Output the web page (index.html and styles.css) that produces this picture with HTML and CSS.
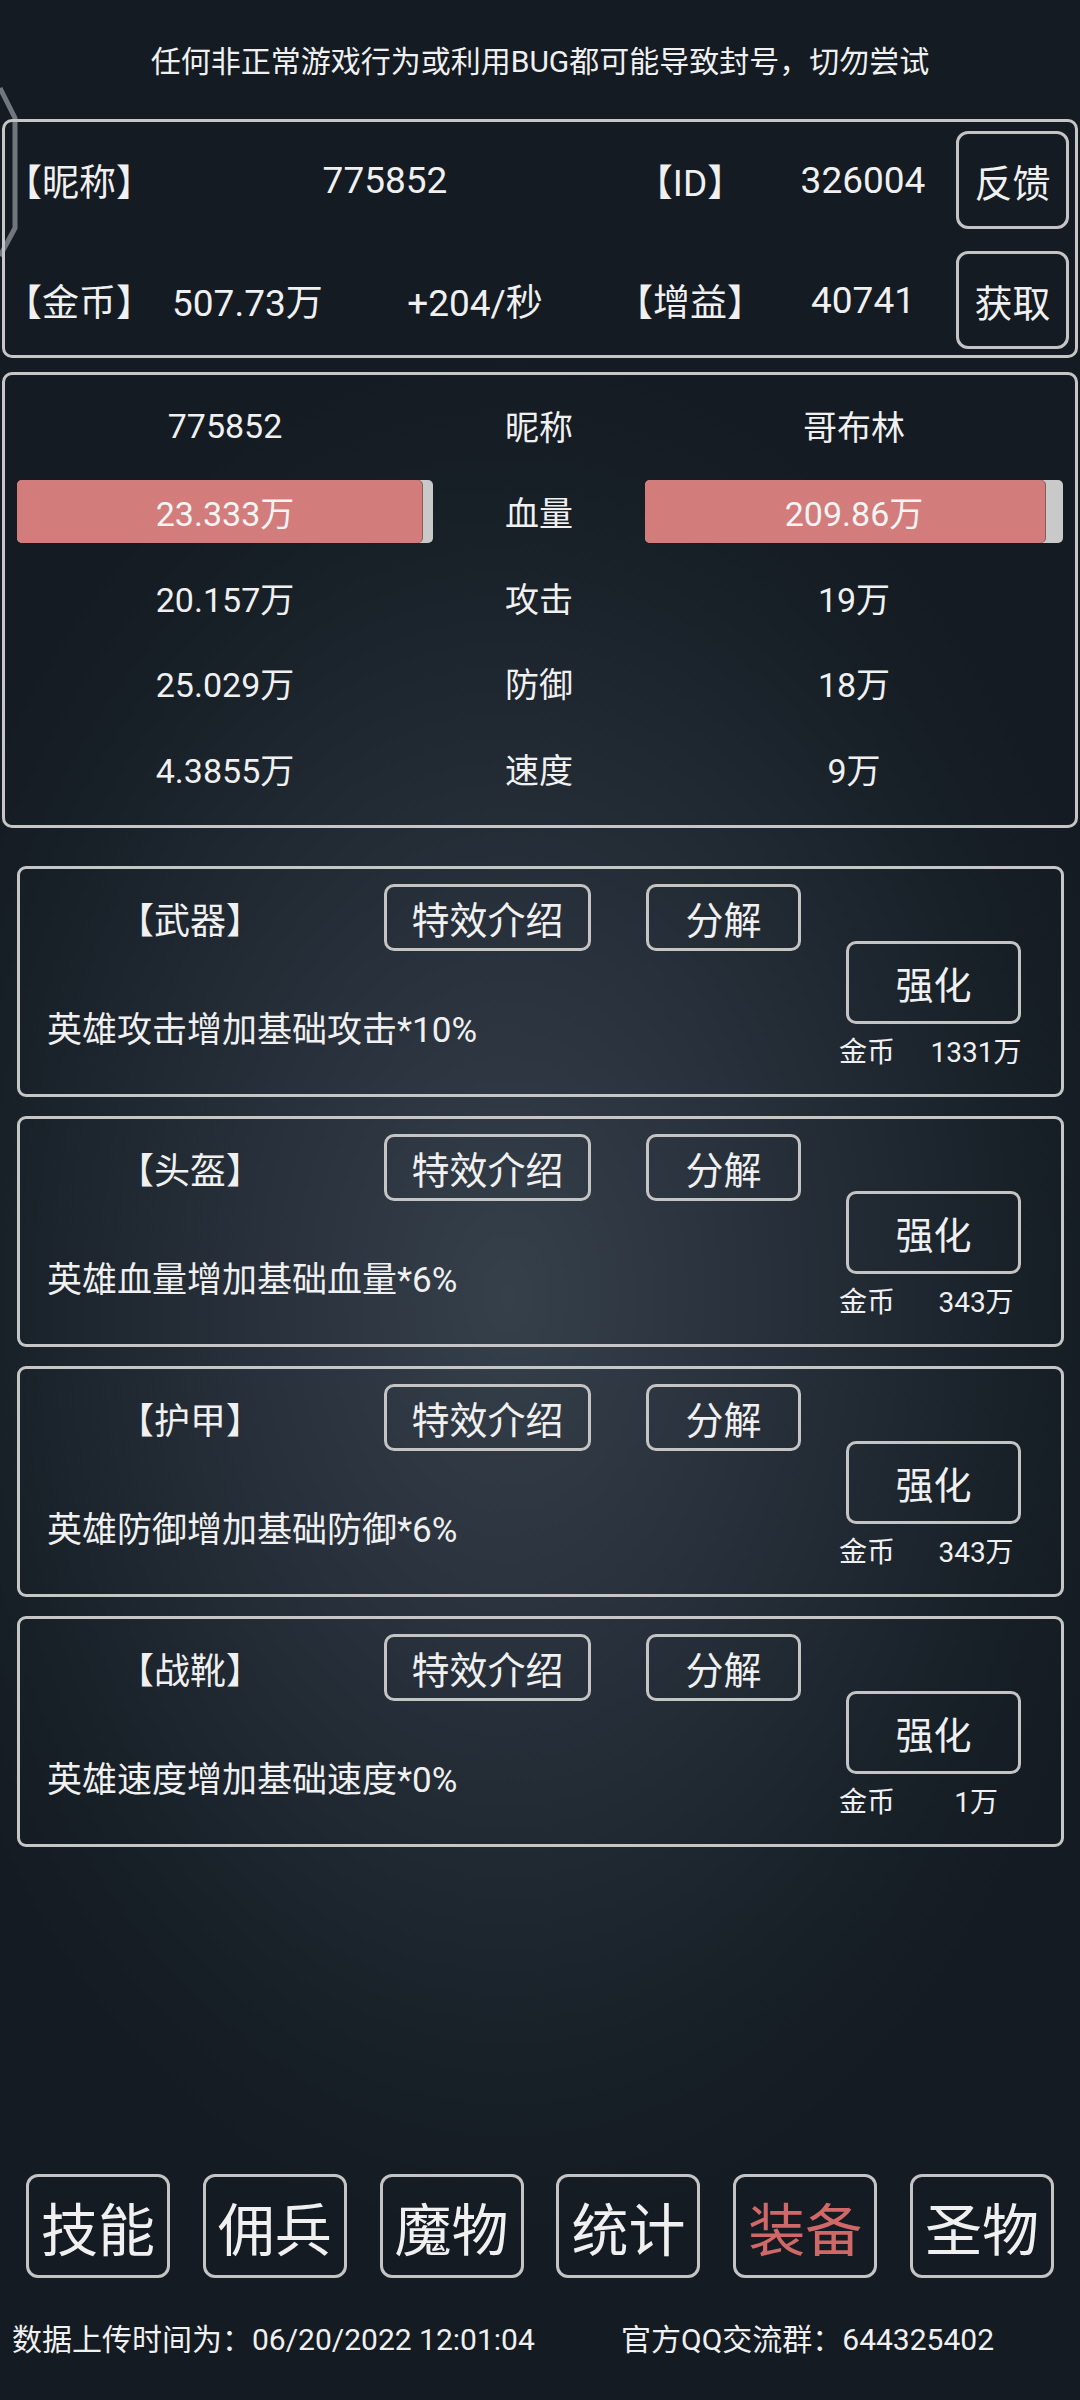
FILE: index.html
```html
<!DOCTYPE html>
<html lang="zh">
<head>
<meta charset="UTF-8">
<meta name="viewport" content="width=device-width, initial-scale=1.0">
<title>装备</title>
<link rel="stylesheet" href="styles.css">
</head>
<body>
<svg class="edge" width="24" height="180" viewBox="0 0 24 180"><path d="M0 2 L15 32 L15 142 L0 170" fill="none" stroke="rgba(190,195,200,0.55)" stroke-width="5"/></svg>

<div class="notice">任何非正常游戏行为或利用BUG都可能导致封号，切勿尝试</div>

<div class="info">
  <div class="lbl">【昵称】</div>
  <div class="val wide">775852</div>
  <div class="lbl mid">【ID】</div>
  <div class="val">326004</div>
  <button class="btn side">反馈</button>
  <div class="lbl">【金币】</div>
  <div class="val left">507.73万</div>
  <div class="val">+204/秒</div>
  <div class="lbl mid">【增益】</div>
  <div class="val">40741</div>
  <button class="btn side">获取</button>
</div>

<div class="stats">
  <div>775852</div><div>昵称</div><div>哥布林</div>
  <div class="bar"><div class="fill" style="width:97.4%"></div><span>23.333万</span></div>
  <div>血量</div>
  <div class="bar"><div class="fill" style="width:95.7%"></div><span>209.86万</span></div>
  <div>20.157万</div><div>攻击</div><div>19万</div>
  <div>25.029万</div><div>防御</div><div>18万</div>
  <div>4.3855万</div><div>速度</div><div>9万</div>
</div>

<div class="card">
  <div class="card-main">
    <div class="card-top">
      <div class="card-title">【武器】</div>
      <button class="btn fx">特效介绍</button>
      <button class="btn split">分解</button>
    </div>
    <div class="card-desc">英雄攻击增加基础攻击*10%</div>
  </div>
  <div class="card-side">
    <button class="btn up">强化</button>
    <div class="price"><span>金币</span><span class="num">1331万</span></div>
  </div>
</div>

<div class="card">
  <div class="card-main">
    <div class="card-top">
      <div class="card-title">【头盔】</div>
      <button class="btn fx">特效介绍</button>
      <button class="btn split">分解</button>
    </div>
    <div class="card-desc">英雄血量增加基础血量*6%</div>
  </div>
  <div class="card-side">
    <button class="btn up">强化</button>
    <div class="price"><span>金币</span><span class="num">343万</span></div>
  </div>
</div>

<div class="card">
  <div class="card-main">
    <div class="card-top">
      <div class="card-title">【护甲】</div>
      <button class="btn fx">特效介绍</button>
      <button class="btn split">分解</button>
    </div>
    <div class="card-desc">英雄防御增加基础防御*6%</div>
  </div>
  <div class="card-side">
    <button class="btn up">强化</button>
    <div class="price"><span>金币</span><span class="num">343万</span></div>
  </div>
</div>

<div class="card">
  <div class="card-main">
    <div class="card-top">
      <div class="card-title">【战靴】</div>
      <button class="btn fx">特效介绍</button>
      <button class="btn split">分解</button>
    </div>
    <div class="card-desc">英雄速度增加基础速度*0%</div>
  </div>
  <div class="card-side">
    <button class="btn up">强化</button>
    <div class="price"><span>金币</span><span class="num">1万</span></div>
  </div>
</div>

<div class="nav">
  <button class="btn tab">技能</button>
  <button class="btn tab">佣兵</button>
  <button class="btn tab">魔物</button>
  <button class="btn tab">统计</button>
  <button class="btn tab active">装备</button>
  <button class="btn tab">圣物</button>
</div>

<div class="footer">
  <span class="upload">数据上传时间为：06/20/2022 12:01:04</span>
  <span>官方QQ交流群：644325402</span>
</div>
</body>
</html>
```

FILE: styles.css
```css
* { box-sizing: border-box; }
body {
  margin: 0; width: 1080px; height: 2400px; overflow: hidden; position: relative;
  background: radial-gradient(ellipse 640px 950px at 47% 54%, #36404a 0%, #28313b 40%, #182028 80%, #141b22 100%);
  color: #f0f0f0;
  font-family: Roboto, "Noto Sans CJK SC", sans-serif;
}
.edge { position: absolute; left: 0; top: 86px; }

.btn {
  font: inherit; color: inherit; background: transparent; padding: 0;
  border: 3px solid #c4c4c4; border-radius: 12px;
  display: flex; align-items: center; justify-content: center;
}

.notice { height: 119px; display: flex; align-items: center; justify-content: center; font-size: 30px; padding-bottom: 2px; }

/* top info box */
.info {
  width: 1076px; height: 239px; margin-left: 2px;
  border: 3px solid #c6c6c6; border-radius: 10px;
  display: grid; grid-template-columns: 155px 180px 270px 160px 186px 113px;
  grid-template-rows: 98px 98px; row-gap: 22px; padding-top: 9px;
  font-size: 37px; align-items: center;
}
.info .lbl { white-space: nowrap; }
.info .mid { text-align: center; }
.info .val { text-align: center; }
.info .wide { grid-column: span 2; }
.info .left { text-align: left; padding-left: 12px; }
.info .side { height: 98px; font-size: 38px; }

/* stats */
.stats {
  width: 1076px; height: 456px; margin: 14px 0 0 2px;
  border: 3px solid #c6c6c6; border-radius: 10px;
  padding: 8px 12px 0;
  display: grid; grid-template-columns: 416px 1fr 418px; grid-auto-rows: 85.7px;
  align-items: center; text-align: center; font-size: 34px;
}
.bar { display: grid; height: 63px; background: #c9c9c9; border-radius: 5px; align-items: center; }
.bar .fill, .bar span { grid-area: 1 / 1; }
.bar .fill { height: 100%; background: #d27c7c; border-radius: 5px; box-shadow: 1px 0 0 #8a5a5a; }
.bar span { color: #f4f4f4; }

/* equipment cards */
.card {
  width: 1047px; height: 231px; margin: 19px 0 0 17px;
  border: 3px solid #c6c6c6; border-radius: 9px; display: flex;
}
.stats + .card { margin-top: 38px; }
.card-main { width: 819px; }
.card-top { margin-top: 15px; height: 67px; display: flex; align-items: center; }
.card-title { margin-left: 98px; width: 140px; font-size: 36px; white-space: nowrap; }
.card .fx { margin-left: 126px; width: 207px; height: 67px; font-size: 38px; border-radius: 10px; }
.card .split { margin-left: 55px; width: 155px; height: 67px; font-size: 38px; border-radius: 10px; }
.card-desc { margin: 60px 0 0 27px; font-size: 35px; line-height: 40px; white-space: nowrap; }
.card-side { width: 222px; padding-top: 72px; }
.card .up { margin-left: 7px; width: 175px; height: 83px; font-size: 38px; border-radius: 10px; }
.price { margin-top: 12px; display: flex; font-size: 28px; line-height: 34px; }
.price .num { width: 108px; margin-left: 27px; text-align: center; }

/* bottom nav */
.nav { margin-top: 327px; padding: 0 26px; display: flex; justify-content: space-between; }
.tab { width: 144px; height: 104px; font-size: 57px; }
.tab.active { color: #d06868; }

.footer { margin-top: 42px; padding-left: 12px; display: flex; font-size: 30px; line-height: 40px; white-space: nowrap; }
.footer .upload { width: 609px; }
```
